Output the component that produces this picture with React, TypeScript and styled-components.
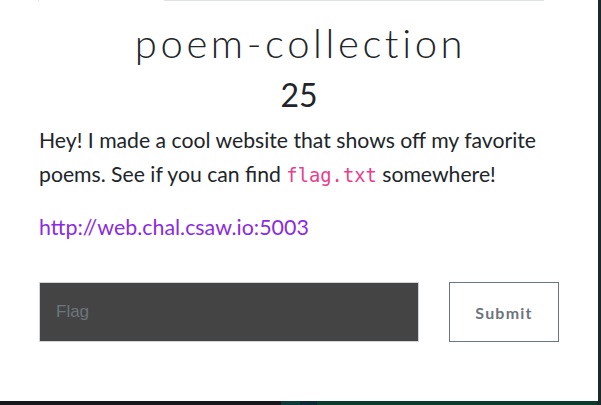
import styled, { createGlobalStyle } from "styled-components";

const GlobalStyle = createGlobalStyle`
  html, body {
    margin: 0;
    padding: 0;
    width: 601px;
    height: 405px;
    overflow: hidden;
    background: linear-gradient(
      to right,
      #16181b 0 281px,
      #0b3a3a 281px 300px,
      #0c2a35 300px 317px,
      #0b3b2a 317px 597px,
      #1a2a2a 597px
    );
  }
`;

const Modal = styled.div`
  width: 598px;
  height: 401px;
  background: #fff;
  overflow: hidden;
  font-family: Lato, "Liberation Sans", sans-serif;
  color: #212529;
`;

const Tabs = styled.div`
  display: flex;
  height: 1px;
  padding-left: 38px;
`;

const Tab = styled.div<{ active?: boolean; w: number }>`
  width: ${(p) => p.w}px;
  background: ${(p) => (p.active ? "transparent" : "#dee2e6")};
  border-left: ${(p) => (p.active ? "1px solid #dee2e6" : "none")};
`;

const Body = styled.div`
  padding: 19px 39px 0 39px;
`;

const Title = styled.h3`
  margin: 0;
  padding-left: 3px;
  text-align: center;
  font-weight: 300;
  font-size: 40px;
  line-height: 1.15;
  letter-spacing: 3.6px;
`;

const Value = styled.h4`
  margin: 10px 0 0;
  text-align: center;
  font-weight: 400;
  font-size: 32px;
  line-height: 1.2;
`;

const Description = styled.p`
  margin: 9px 0 0;
  font-size: 21.2px;
  line-height: 34px;
`;

const Code = styled.code`
  font-family: "DejaVu Sans Mono", "Liberation Mono", monospace;
  font-size: 18.8px;
  line-height: 1;
  color: #e83e8c;
`;

const Link = styled.a`
  display: block;
  margin-top: 19px;
  font-size: 21.4px;
  line-height: 34px;
  color: #8a2be2;
  text-decoration: none;
`;

const FlagRow = styled.form`
  display: flex;
  gap: 30px;
  margin-top: 38px;
`;

const FlagInput = styled.input`
  box-sizing: border-box;
  width: 380px;
  height: 60px;
  padding: 0 16px;
  background: #444;
  border: 1px solid #ced4da;
  color: #fff;
  font-family: "Liberation Sans", Arial, sans-serif;
  font-size: 17px;
  outline: none;
  &::placeholder {
    color: #6c757d;
  }
`;

const SubmitButton = styled.button`
  box-sizing: border-box;
  width: 110px;
  height: 60px;
  background: #fff;
  border: 1px solid #6c757d;
  border-radius: 0;
  color: #6c757d;
  font-family: Lato, "Liberation Sans", sans-serif;
  font-weight: 700;
  font-size: 16px;
  letter-spacing: 1.2px;
  cursor: pointer;
`;

const App = () => {
  return (
    <>
      <GlobalStyle />
      <Modal>
        <Tabs>
          <Tab active w={125} />
          <Tab w={380} />
        </Tabs>
        <Body>
          <Title>poem-collection</Title>
          <Value>25</Value>
          <Description>
            Hey! I made a cool website that shows off my favorite poems. See if
            you can find <Code>flag.txt</Code> somewhere!
          </Description>
          <Link href="#">http://web.chal.csaw.io:5003</Link>
          <FlagRow onSubmit={(e) => e.preventDefault()}>
            <FlagInput placeholder="Flag" />
            <SubmitButton type="submit">Submit</SubmitButton>
          </FlagRow>
        </Body>
      </Modal>
    </>
  );
};

export default App;
